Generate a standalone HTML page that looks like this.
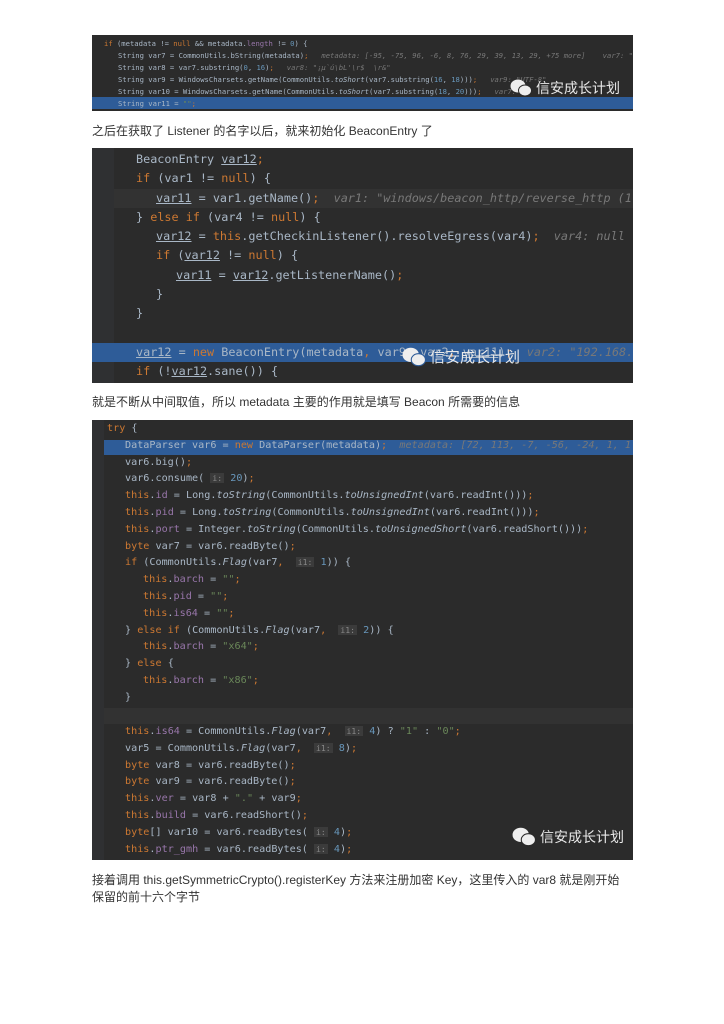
<!DOCTYPE html>
<html><head><meta charset="utf-8"><style>
body{margin:0;background:#fff;width:724px;height:1024px;position:relative;overflow:hidden;font-family:"Liberation Sans","Noto Sans CJK SC",sans-serif}
.img{position:absolute;left:92px;width:541px;background:#2b2b2b;overflow:hidden}
.l{position:absolute;white-space:pre;font-family:"DejaVu Sans Mono","Liberation Mono",monospace;color:#a9b7c6}
.hl{position:absolute;left:0;right:0;background:#2e5c98}
.k{color:#cc7832}.f{color:#9876aa}.s{color:#6a8759}.n{color:#6897bb}.c{color:#787878;font-style:italic}.i{font-style:italic}.u{text-decoration:underline}
.h{background:#3b3b3b;color:#888;font-size:0.8em;padding:0 2px}
.cap{position:absolute;left:92px;font-size:12px;color:#333;line-height:17px}
.wm{position:absolute;color:#e8e8e8;font-family:"Noto Sans CJK SC",sans-serif;font-size:14px;display:flex;align-items:center;gap:4px}
</style></head><body>

<div class="img" style="top:35px;height:76px;font-size:7.2px">
<div class="hl" style="top:62px;height:12px"></div>
<div class="l" style="left:12px;top:4px"><span class="k">if</span> (metadata != <span class="k">null</span> &amp;&amp; metadata.<span class="f">length</span> != <span class="n">0</span>) {</div>
<div class="l" style="left:26px;top:16px">String var7 = CommonUtils.bString(metadata)<span class="k">;</span>   <span class="c">metadata: [-95, -75, 96, -6, 8, 76, 29, 39, 13, 29, +75 more]    var7: ";</span></div>
<div class="l" style="left:26px;top:28px">String var8 = var7.substring(<span class="n">0</span>, <span class="n">16</span>)<span class="k">;</span>   <span class="c">var8: "¡µ`ú\bL'\r$  \r&amp;"</span></div>
<div class="l" style="left:26px;top:40px">String var9 = WindowsCharsets.getName(CommonUtils.<span class="i">toShort</span>(var7.substring(<span class="n">16</span>, <span class="n">18</span>)))<span class="k">;</span>   <span class="c">var9: "UTF-8"</span></div>
<div class="l" style="left:26px;top:52px">String var10 = WindowsCharsets.getName(CommonUtils.<span class="i">toShort</span>(var7.substring(<span class="n">18</span>, <span class="n">20</span>)))<span class="k">;</span>   <span class="c">var7:</span></div>
<div class="l" style="left:26px;top:64px">String var11 = <span class="s">""</span><span class="k">;</span></div>
<div class="wm" style="left:418px;top:43px"><svg width="22" height="18" viewBox="0 0 22 18"><ellipse cx="8" cy="7" rx="7.5" ry="6.5" fill="#eee"/><ellipse cx="15" cy="11.5" rx="6.5" ry="5.5" fill="#eee" stroke="#2b2b2b" stroke-width="1"/></svg>信安成长计划</div>
</div>
<div class="cap" style="top:123px">之后在获取了 Listener 的名字以后，就来初始化 BeaconEntry 了</div>

<div class="img" style="top:148px;height:235px;font-size:11.8px">
<div style="position:absolute;left:0;top:0;width:22px;height:235px;background:#2f3032"></div>
<div style="position:absolute;left:22px;right:0;top:41px;height:19px;background:#323232"></div>
<div class="hl" style="top:195px;height:19px"></div>
<div class="l" style="left:44px;top:4px">BeaconEntry <span class="u">var12</span><span class="k">;</span></div>
<div class="l" style="left:44px;top:23px"><span class="k">if</span> (var1 != <span class="k">null</span>) {</div>
<div class="l" style="left:64px;top:43px"><span class="u">var11</span> = var1.getName()<span class="k">;</span>  <span class="c">var1: "windows/beacon_http/reverse_http (1</span></div>
<div class="l" style="left:44px;top:62px">} <span class="k">else if</span> (var4 != <span class="k">null</span>) {</div>
<div class="l" style="left:64px;top:81px"><span class="u">var12</span> = <span class="k">this</span>.getCheckinListener().resolveEgress(var4)<span class="k">;</span>  <span class="c">var4: null</span></div>
<div class="l" style="left:64px;top:100px"><span class="k">if</span> (<span class="u">var12</span> != <span class="k">null</span>) {</div>
<div class="l" style="left:84px;top:120px"><span class="u">var11</span> = <span class="u">var12</span>.getListenerName()<span class="k">;</span></div>
<div class="l" style="left:64px;top:139px">}</div>
<div class="l" style="left:44px;top:158px">}</div>
<div class="l" style="left:44px;top:197px"><span class="u">var12</span> = <span class="k">new</span> BeaconEntry(metadata<span class="k">,</span> var9<span class="k">,</span> var2<span class="k">,</span> <span class="u">var11</span>)<span class="k">;</span>  <span class="c">var2: "192.168.</span></div>
<div class="l" style="left:44px;top:216px"><span class="k">if</span> (!<span class="u">var12</span>.sane()) {</div>
<div class="wm" style="left:310px;top:198px;font-size:15px"><svg width="24" height="20" viewBox="0 0 22 18"><ellipse cx="8" cy="7" rx="7.5" ry="6.5" fill="#eee"/><ellipse cx="15" cy="11.5" rx="6.5" ry="5.5" fill="#eee" stroke="#2e5c98" stroke-width="1"/></svg>信安成长计划</div>
</div>
<div class="cap" style="top:394px">就是不断从中间取值，所以 metadata 主要的作用就是填写 Beacon 所需要的信息</div>

<div class="img" style="top:420px;height:440px;font-size:10.15px">
<div style="position:absolute;left:0;top:0;width:12px;height:440px;background:#2f3032"></div>
<div style="position:absolute;left:12px;right:0;top:288px;height:16px;background:#323232"></div>
<div class="hl" style="top:20px;height:15px;left:12px"></div>
<div class="l" style="left:15px;top:3px"><span class="k">try</span> {</div>
<div class="l" style="left:33px;top:20px">DataParser var6 = <span class="k">new</span> DataParser(metadata)<span class="k">;</span>  <span class="c">metadata: [72, 113, -7, -56, -24, 1, 1</span></div>
<div class="l" style="left:33px;top:37px">var6.big()<span class="k">;</span></div>
<div class="l" style="left:33px;top:53px">var6.consume( <span class="h">i:</span> <span class="n">20</span>)<span class="k">;</span></div>
<div class="l" style="left:33px;top:70px"><span class="k">this</span>.<span class="f">id</span> = Long.<span class="i">toString</span>(CommonUtils.<span class="i">toUnsignedInt</span>(var6.readInt()))<span class="k">;</span></div>
<div class="l" style="left:33px;top:87px"><span class="k">this</span>.<span class="f">pid</span> = Long.<span class="i">toString</span>(CommonUtils.<span class="i">toUnsignedInt</span>(var6.readInt()))<span class="k">;</span></div>
<div class="l" style="left:33px;top:104px"><span class="k">this</span>.<span class="f">port</span> = Integer.<span class="i">toString</span>(CommonUtils.<span class="i">toUnsignedShort</span>(var6.readShort()))<span class="k">;</span></div>
<div class="l" style="left:33px;top:121px"><span class="k">byte</span> var7 = var6.readByte()<span class="k">;</span></div>
<div class="l" style="left:33px;top:137px"><span class="k">if</span> (CommonUtils.<span class="i">Flag</span>(var7<span class="k">,</span>  <span class="h">i1:</span> <span class="n">1</span>)) {</div>
<div class="l" style="left:51px;top:154px"><span class="k">this</span>.<span class="f">barch</span> = <span class="s">""</span><span class="k">;</span></div>
<div class="l" style="left:51px;top:171px"><span class="k">this</span>.<span class="f">pid</span> = <span class="s">""</span><span class="k">;</span></div>
<div class="l" style="left:51px;top:188px"><span class="k">this</span>.<span class="f">is64</span> = <span class="s">""</span><span class="k">;</span></div>
<div class="l" style="left:33px;top:205px">} <span class="k">else if</span> (CommonUtils.<span class="i">Flag</span>(var7<span class="k">,</span>  <span class="h">i1:</span> <span class="n">2</span>)) {</div>
<div class="l" style="left:51px;top:221px"><span class="k">this</span>.<span class="f">barch</span> = <span class="s">"x64"</span><span class="k">;</span></div>
<div class="l" style="left:33px;top:238px">} <span class="k">else</span> {</div>
<div class="l" style="left:51px;top:255px"><span class="k">this</span>.<span class="f">barch</span> = <span class="s">"x86"</span><span class="k">;</span></div>
<div class="l" style="left:33px;top:272px">}</div>
<div class="l" style="left:33px;top:306px"><span class="k">this</span>.<span class="f">is64</span> = CommonUtils.<span class="i">Flag</span>(var7<span class="k">,</span>  <span class="h">i1:</span> <span class="n">4</span>) ? <span class="s">"1"</span> : <span class="s">"0"</span><span class="k">;</span></div>
<div class="l" style="left:33px;top:323px">var5 = CommonUtils.<span class="i">Flag</span>(var7<span class="k">,</span>  <span class="h">i1:</span> <span class="n">8</span>)<span class="k">;</span></div>
<div class="l" style="left:33px;top:340px"><span class="k">byte</span> var8 = var6.readByte()<span class="k">;</span></div>
<div class="l" style="left:33px;top:356px"><span class="k">byte</span> var9 = var6.readByte()<span class="k">;</span></div>
<div class="l" style="left:33px;top:373px"><span class="k">this</span>.<span class="f">ver</span> = var8 + <span class="s">"."</span> + var9<span class="k">;</span></div>
<div class="l" style="left:33px;top:390px"><span class="k">this</span>.<span class="f">build</span> = var6.readShort()<span class="k">;</span></div>
<div class="l" style="left:33px;top:407px"><span class="k">byte</span>[] var10 = var6.readBytes( <span class="h">i:</span> <span class="n">4</span>)<span class="k">;</span></div>
<div class="l" style="left:33px;top:424px"><span class="k">this</span>.<span class="f">ptr_gmh</span> = var6.readBytes( <span class="h">i:</span> <span class="n">4</span>)<span class="k">;</span></div>
<div class="wm" style="left:420px;top:407px;font-size:14px"><svg width="24" height="20" viewBox="0 0 22 18"><ellipse cx="8" cy="7" rx="7.5" ry="6.5" fill="#eee"/><ellipse cx="15" cy="11.5" rx="6.5" ry="5.5" fill="#eee" stroke="#2b2b2b" stroke-width="1"/></svg>信安成长计划</div>
</div>
<div class="cap" style="top:872px;width:538px">接着调用 this.getSymmetricCrypto().registerKey 方法来注册加密 Key，这里传入的 var8 就是刚开始保留的前十六个字节</div>
</body></html>
